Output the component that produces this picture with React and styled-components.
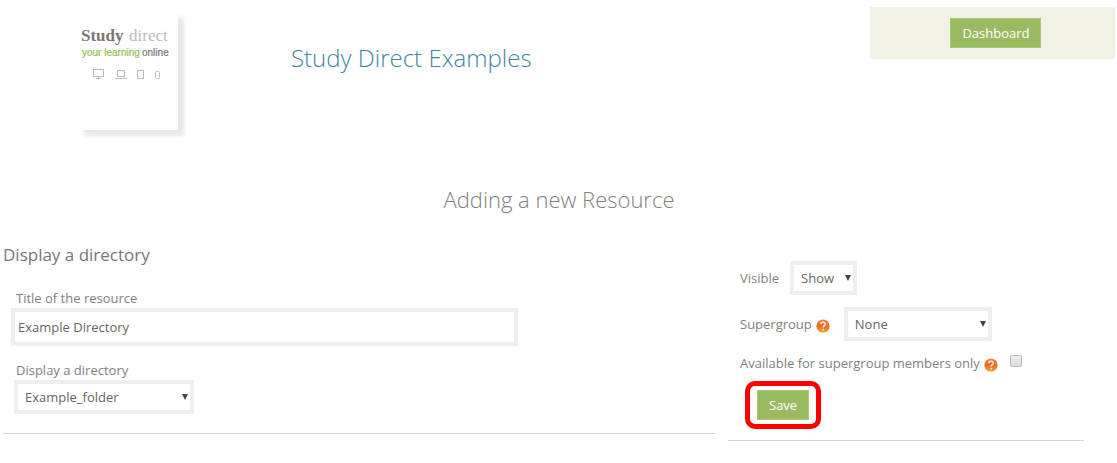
import React, { useState } from "react";
import styled, { createGlobalStyle } from "styled-components";

// STYLE
const GlobalStyle = createGlobalStyle`
  *, *::before, *::after {
    box-sizing: border-box;
  }
  body {
    margin: 0;
    background-color: #fff;
    color: #777;
    font-family: "Open Sans", "Noto Sans", sans-serif;
    font-size: 13px;
    line-height: 20px;
  }
  h1, h2, h3, p {
    margin: 0;
  }
`;
const Page = styled.div`
  padding: 7px 2px 20px 3px;
`;
const Header = styled.header`
  display: flex;
  align-items: flex-start;
`;
const LogoCard = styled.a`
  margin: 4px 0 0 75px;
  width: 100px;
  height: 119px;
  flex-shrink: 0;
  background-color: #fff;
  box-shadow: 6px 6px 4px #e8e8e8;

  svg {
    display: block;
  }
`;
const SiteTitle = styled.h1`
  flex: 1;
  padding: 35px 0 0 113px;
  color: #43869f;
  font-size: 24px;
  font-weight: 300;
  line-height: 32px;
`;
const HeaderPanel = styled.nav`
  width: 22%;
  padding: 11px 0 11px 80px;
  background-color: #f1f1e5;
`;
const Button = styled.button`
  height: 30px;
  padding: 0 11px;
  border: 1px solid #a9c87a;
  background-color: #9aba60;
  color: #fff;
  font-family: inherit;
  font-size: 13px;
  line-height: 20px;
  cursor: pointer;
`;
const PageHeading = styled.h2`
  margin-top: 53px;
  color: #808080;
  font-size: 22px;
  font-weight: 300;
  line-height: 32px;
  text-align: center;
`;
const Form = styled.form`
  margin-top: 28px;
  padding-right: 31px;
  display: grid;
  grid-template-columns: 2fr 1fr;
  column-gap: 13px;
  align-items: start;
`;
const MainColumn = styled.section`
  padding-bottom: 19px;
  border-bottom: 1px solid #d4d4d4;
`;
const SectionHeading = styled.h3`
  margin-bottom: 21px;
  color: #777;
  font-size: 17px;
  font-weight: 400;
  line-height: 24px;
`;
const Field = styled.div`
  padding-left: 8px;
  display: flex;
  flex-direction: column;
  align-items: flex-start;

  & + & {
    margin-top: 14px;
    padding-left: 11px;
  }
`;
const Label = styled.label`
  color: #808080;

  ${Field} & {
    margin-left: 5px;
  }
  ${Field} + ${Field} & {
    margin-left: 2px;
  }
`;
const TextInput = styled.input`
  width: 72%;
  height: 38px;
  padding: 0 3px;
  border: 4px solid #eee;
  background-color: #fff;
  color: #666;
  font-family: inherit;
  font-size: 13px;
`;
const SelectWrapper = styled.div`
  position: relative;
  width: ${({ $width }) => $width};

  &::after {
    content: "";
    position: absolute;
    top: 14px;
    right: 6px;
    border: 3px solid transparent;
    border-top: 6px solid #444;
    border-bottom: 0;
    pointer-events: none;
  }
`;
const SelectBox = styled.select`
  display: block;
  width: 100%;
  height: 34px;
  padding: 0 16px 0 7px;
  border: 4px solid #eee;
  border-radius: 0;
  background-color: #fff;
  color: #666;
  font-family: inherit;
  font-size: 13px;
  appearance: none;
`;
const SideColumn = styled.aside`
  padding: 18px 0 11px 12px;
  border-bottom: 1px solid #d4d4d4;
`;
const SideRow = styled.div`
  display: flex;
  align-items: center;

  & + & {
    margin-top: 12px;
  }
  ${SelectWrapper} {
    margin-left: ${({ $gap }) => $gap};
  }
`;
const Help = styled.svg`
  margin: 4px 0 0 4px;
  width: 14px;
  height: 14px;
  flex-shrink: 0;
`;
const Checkbox = styled.input`
  margin: 0 0 4px 12px;
  width: 12px;
  height: 12px;
  border: 1px solid #bbb;
  border-radius: 2px;
  background: linear-gradient(#eee, #dcdcdc);
  appearance: none;

  &:checked {
    background: #777;
  }
`;
const SaveHighlight = styled.div`
  margin: 8px 0 0 5px;
  padding: 4px 7px;
  width: fit-content;
  border: 5px solid #fe0000;
  border-radius: 10px;

  ${Button} {
    display: block;
  }
`;

// COMPONENT
const Logo = () => (
  <svg width="100" height="119" viewBox="0 0 100 119" role="img" aria-label="Study direct">
    <g fontFamily="Liberation Serif, serif" fontSize="17">
      <text x="3" y="30" fill="#777" fontWeight="bold">Study</text>
      <text x="51" y="30" fill="#bbb">direct</text>
    </g>
    <g fontFamily="Liberation Sans, sans-serif" fontSize="10">
      <text x="4" y="45" fill="#94bf50" stroke="#94bf50" strokeWidth="0.2">your learning</text>
      <text x="64" y="45" fill="#777" stroke="#777" strokeWidth="0.2">online</text>
    </g>
    <g fill="none" stroke="#bbb">
      <rect x="15.500" y="58.500" width="10" height="7" />
      <path d="M18 67.500h5M20.500 66v1" />
      <rect x="39.500" y="59.500" width="7" height="6" />
      <path d="M37 67.500h12" />
      <rect x="59.500" y="59.500" width="6" height="8" />
      <path d="M61.500 65.500h2" stroke="#ddd" />
      <rect x="77.500" y="60.500" width="4" height="7" rx="1" />
      <path d="M79 65.500h1" stroke="#ddd" />
    </g>
  </svg>
);

const HelpIcon = () => (
  <Help viewBox="0 0 14 14" aria-hidden="true">
    <defs>
      <linearGradient id="helpFill" x1="0" y1="0" x2="0" y2="1">
        <stop offset="0" stopColor="#f58455" />
        <stop offset="0.5" stopColor="#ee6826" />
        <stop offset="1" stopColor="#efa02c" />
      </linearGradient>
    </defs>
    <circle cx="7" cy="7" r="6.600" fill="url(#helpFill)" />
    <path d="M4.700 5.300C4.800 2.700 9.400 2.700 9.300 5.200C9.200 6.700 7.200 6.700 7.100 8.500" fill="none" stroke="#ffe9dc" strokeWidth="1.500" />
    <circle cx="7.100" cy="10.700" r="0.900" fill="#ffe9dc" />
  </Help>
);

const Select = ({ id, width, options }) => (
  <SelectWrapper $width={width}>
    <SelectBox id={id}>
      {options.map((option) => (
        <option key={option}>{option}</option>
      ))}
    </SelectBox>
  </SelectWrapper>
);

const App = () => {
  const [title, setTitle] = useState("Example Directory");

  return (
    <>
      <GlobalStyle />
      <Page>
        <Header>
          <LogoCard href="#">
            <Logo />
          </LogoCard>
          <SiteTitle>Study Direct Examples</SiteTitle>
          <HeaderPanel>
            <Button type="button">Dashboard</Button>
          </HeaderPanel>
        </Header>
        <PageHeading>Adding a new Resource</PageHeading>
        <Form onSubmit={(e) => e.preventDefault()}>
          <MainColumn>
            <SectionHeading>Display a directory</SectionHeading>
            <Field>
              <Label htmlFor="title">Title of the resource</Label>
              <TextInput
                id="title"
                type="text"
                value={title}
                onChange={(e) => setTitle(e.target.value)}
              />
            </Field>
            <Field>
              <Label htmlFor="directory">Display a directory</Label>
              <Select id="directory" width="180px" options={["Example_folder"]} />
            </Field>
          </MainColumn>
          <SideColumn>
            <SideRow $gap="11px">
              <Label htmlFor="visible">Visible</Label>
              <Select id="visible" width="67px" options={["Show"]} />
            </SideRow>
            <SideRow $gap="14px">
              <Label htmlFor="supergroup">Supergroup</Label>
              <HelpIcon />
              <Select id="supergroup" width="148px" options={["None"]} />
            </SideRow>
            <SideRow>
              <Label htmlFor="members">Available for supergroup members only</Label>
              <HelpIcon />
              <Checkbox id="members" type="checkbox" />
            </SideRow>
            <SaveHighlight>
              <Button type="submit">Save</Button>
            </SaveHighlight>
          </SideColumn>
        </Form>
      </Page>
    </>
  );
};

export default App;
